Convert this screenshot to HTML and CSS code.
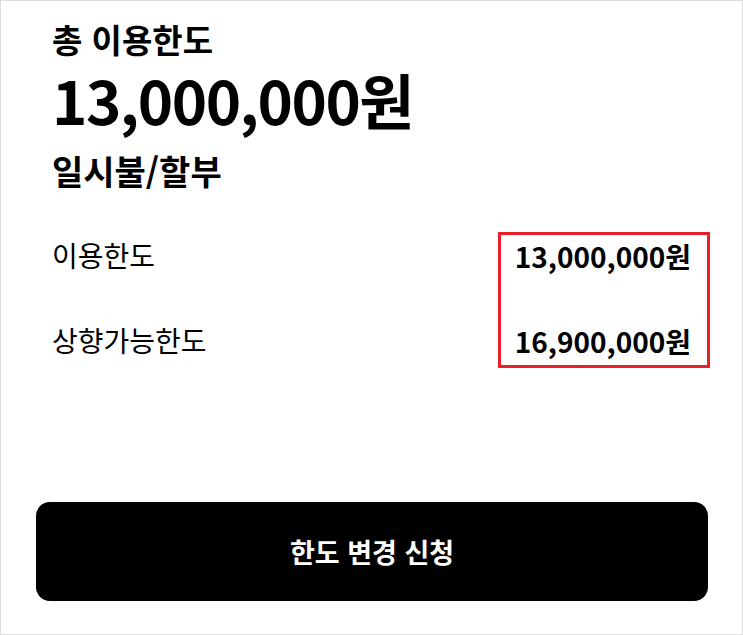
FILE: index.html
```html
<!DOCTYPE html>
<html lang="ko">
<head>
    <meta charset="UTF-8">
    <meta name="viewport" content="width=device-width, initial-scale=1.0">
    <title>총 이용한도</title>
    <link rel="stylesheet" href="styles.css">
</head>
<body>
    <div class="page">
        <div class="summary">
            <div class="summary-label">총 이용한도</div>
            <div class="summary-amount">13,000,000원</div>
            <div class="section-title">일시불/할부</div>
        </div>

        <div class="limits">
            <div class="limit-labels">
                <div class="limit-label">이용한도</div>
                <div class="limit-label">상향가능한도</div>
            </div>
            <div class="limit-values">
                <div class="limit-value">13,000,000원</div>
                <div class="limit-value">16,900,000원</div>
            </div>
        </div>

        <button class="apply-btn">한도 변경 신청</button>
    </div>
</body>
</html>
```

FILE: styles.css
```css
* {
    box-sizing: border-box;
}

body {
    margin: 0;
    background-color: #fff;
    color: #000;
    font-family: "Noto Sans CJK KR", "Noto Sans", sans-serif;
}

.page {
    width: 743px;
    height: 635px;
    border: 1px solid #dcdcdc;
    padding: 0 34px 0 35px;
    display: flex;
    flex-direction: column;
}

.summary {
    padding: 18px 0 0 16px;
}

.summary-label {
    font-size: 33px;
    font-weight: 700;
    line-height: 40px;
}

.summary-amount {
    font-size: 60px;
    font-weight: 700;
    line-height: 68px;
    letter-spacing: -1.5px;
    margin-top: 6px;
}

.section-title {
    font-size: 34px;
    font-weight: 700;
    line-height: 48px;
    margin-top: 14px;
}

.limits {
    display: flex;
    justify-content: space-between;
    margin-top: 37px;
    padding-left: 16px;
}

.limit-labels {
    display: flex;
    flex-direction: column;
    gap: 45px;
    padding-top: 3px;
}

.limit-label {
    font-size: 28px;
    line-height: 40px;
}

.limit-values {
    display: flex;
    flex-direction: column;
    align-items: flex-end;
    gap: 45px;
    width: 212px;
    margin-right: -2px;
    padding: 1px 16px 0 0;
    border: 3px solid #e8202a;
    height: 136px;
}

.limit-value {
    font-size: 28px;
    font-weight: 700;
    line-height: 40px;
}

.apply-btn {
    margin-top: auto;
    margin-bottom: 33px;
    height: 99px;
    width: 100%;
    border: none;
    border-radius: 14px;
    background-color: #000;
    color: #fff;
    font-family: inherit;
    font-size: 27px;
    font-weight: 700;
}
```
